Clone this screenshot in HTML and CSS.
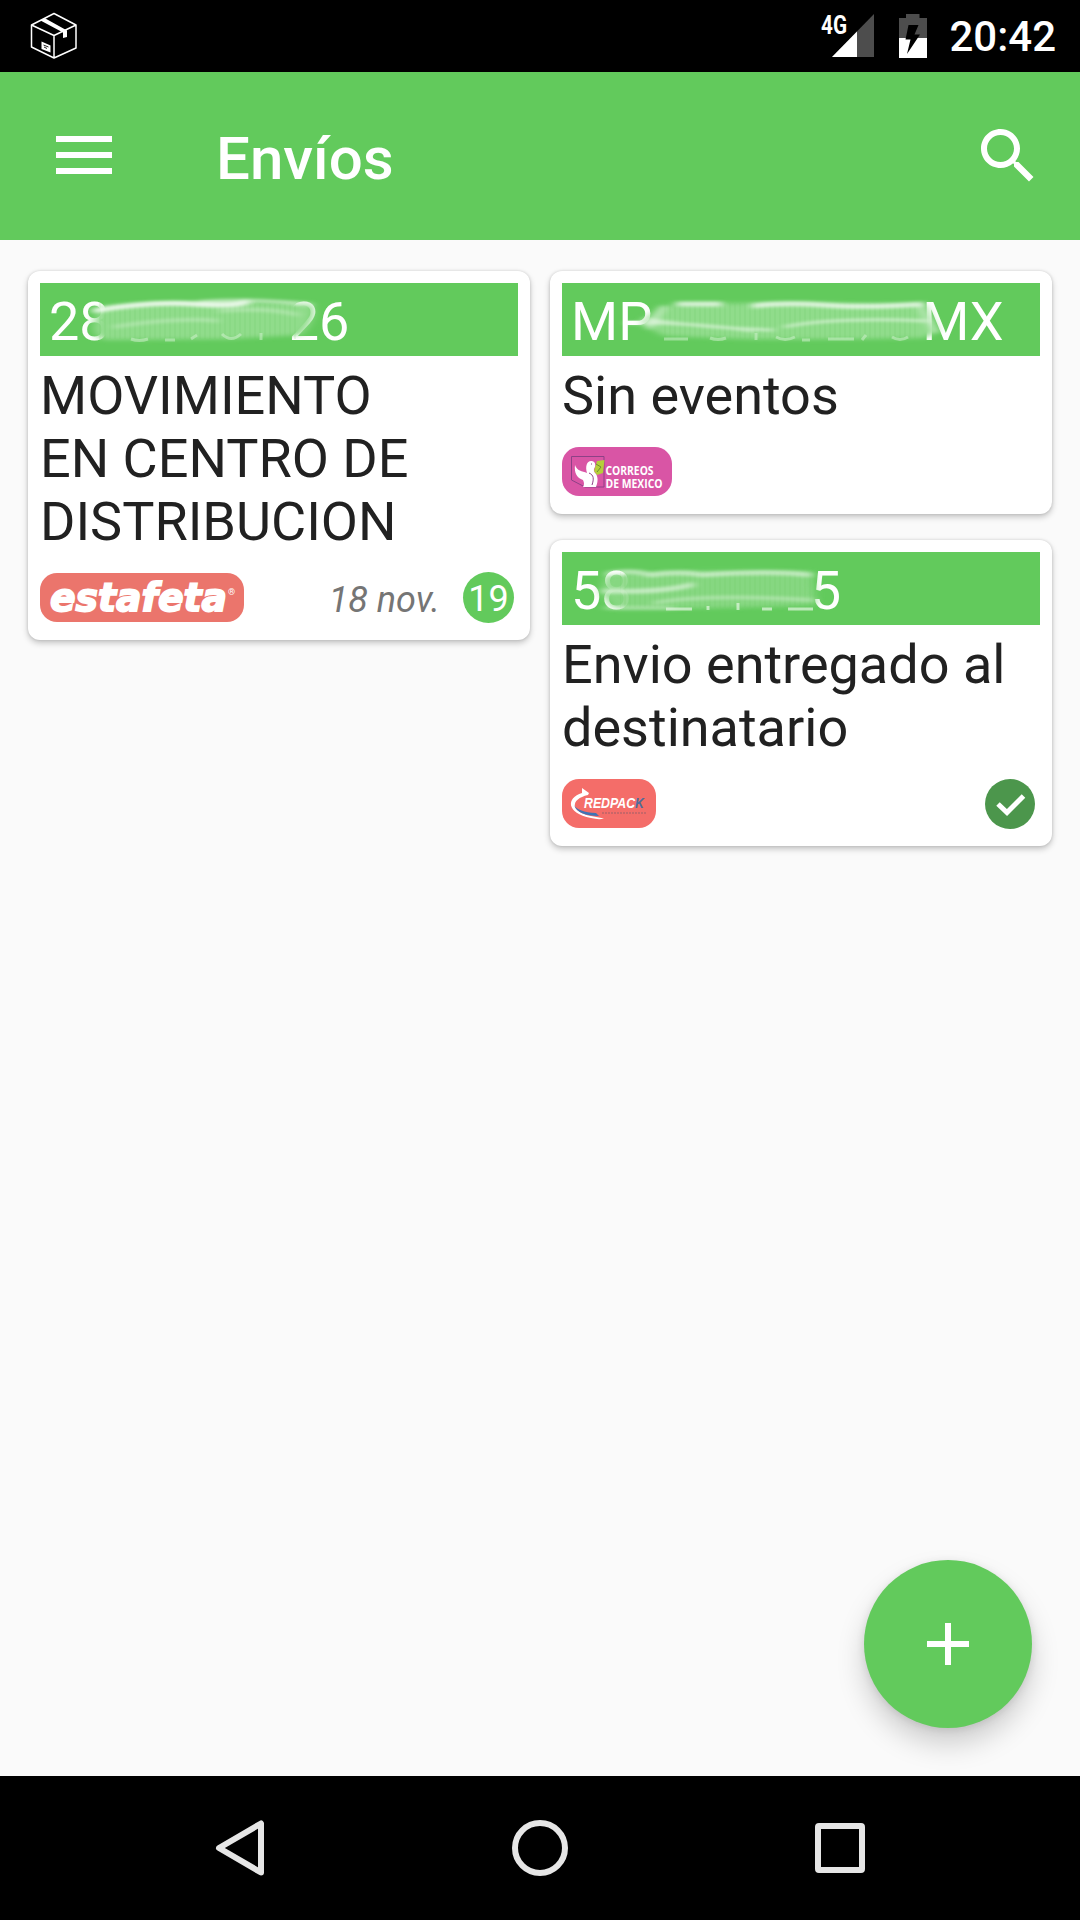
FILE: index.html
```html
<!DOCTYPE html>
<html lang="es">
<head>
    <meta charset="UTF-8">
    <meta name="viewport" content="width=device-width, initial-scale=1.0">
    <title>Envíos</title>
    <link rel="stylesheet" href="styles.css">
</head>
<body>
    <svg class="defs" width="0" height="0">
        <defs>
            <filter id="soft" x="-20%" y="-50%" width="140%" height="200%"><feGaussianBlur stdDeviation="5 2"/></filter>
            <filter id="streak" x="-20%" y="-200%" width="140%" height="500%"><feGaussianBlur stdDeviation="4 1.5"/></filter>
            <pattern id="ripple" width="5" height="42" patternUnits="userSpaceOnUse">
                <rect width="2" height="42" fill="#62ca5c" opacity=".12"/>
            </pattern>
        </defs>
    </svg>

    <div class="status-bar">
        <svg class="package" width="48" height="48" viewBox="0 0 48 48" fill="none" stroke="#fff" stroke-width="1.5" stroke-linejoin="round">
            <path d="M24 1.5 46 13V36L24 46 1.500 35V13ZM1.500 13 24 23.500 46 13M24 23.500V46"/>
            <path d="M10.500 8.500 14.500 6 37 18.500V25L33 26V20.500Z" fill="#fff" stroke="none"/>
            <path d="M11.500 29.500 20.500 33.500V40.500L11.500 37Z" fill="#fff" stroke="none"/>
            <path d="M13.500 33 18.500 35M14 35 17 36.500" stroke="#222" stroke-width="1"/>
        </svg>
        <div class="status-icons">
            <svg width="56" height="44" viewBox="0 0 56 44">
                <path d="M54 0V43H12Z" fill="#4d4d4d"/>
                <path d="M37 17.500V43H12Z" fill="#fff"/>
                <text class="network" x="1" y="20" textLength="26" lengthAdjust="spacingAndGlyphs">4G</text>
            </svg>
            <svg class="battery" width="28" height="44" viewBox="0 0 28 44">
                <path d="M7 0H20.500V4H28V24H0V4H7Z" fill="#4d4d4d"/>
                <path d="M0 24H28V44H0Z" fill="#fff"/>
                <path d="M9.500 11H19.500L15.500 20.500H21L8 40 11.500 25.500H6.500Z" fill="#000"/>
            </svg>
            <span class="clock">20:42</span>
        </div>
    </div>

    <div class="app-bar">
        <svg class="menu" width="56" height="38" viewBox="0 0 56 38" fill="#fff">
            <path d="M0 0H56V6H0ZM0 16H56V22H0ZM0 32H56V38H0Z"/>
        </svg>
        <h1>Envíos</h1>
        <svg class="search" width="72" height="72" viewBox="0 0 24 24" fill="#fff">
            <path d="M15.500 14h-.79l-.28-.27C15.410 12.590 16 11.110 16 9.500 16 5.910 13.090 3 9.500 3S3 5.910 3 9.500 5.910 16 9.500 16c1.610 0 3.090-.59 4.230-1.570l.27.28v.79l5 4.990L20.490 19l-4.990-5zm-6 0C7.010 14 5 11.990 5 9.500S7.010 5 9.500 5 14 7.010 14 9.500 11.990 14 9.500 14z"/>
        </svg>
    </div>

    <div class="content">
        <div class="column">
            <div class="card">
                <div class="code">
                    <span>28</span>
                    <svg class="smear smear-a" width="232" height="50" viewBox="0 0 232 50">
                        <path d="M8 10Q60 5 110 5T222 6Q230 20 212 38L140 42 16 43Q0 38 6 24Z" fill="#90dc8b" filter="url(#soft)"/>
                        <path d="M10 6H210V42H10Z" fill="url(#ripple)"/>
                        <g fill="none" stroke="#fff" filter="url(#streak)">
                            <path d="M4 14Q60 4 105 7T160 4" stroke-width="5" opacity=".8"/>
                            <path d="M110 5Q170 1 222 8" stroke-width="4" opacity=".45"/>
                            <path d="M24 30Q90 20 130 24M130 14Q180 10 210 18" stroke-width="4" opacity=".25"/>
                        </g>
                        <path d="M42 42q8 3 17 0M76 43h10M102 42l6-4M133 37q9 9 19 0M172 36v7" fill="none" stroke="#d6f3d4" stroke-width="3" opacity=".5"/>
                    </svg>
                    <span>26</span>
                </div>
                <p class="event">MOVIMIENTO<br>EN CENTRO DE<br>DISTRIBUCION</p>
                <div class="card-footer">
                    <svg class="chip estafeta" width="204" height="49" viewBox="0 0 204 49">
                        <text class="estafeta-name" x="10" y="38" textLength="177" lengthAdjust="spacingAndGlyphs">estafeta</text>
                        <text class="registered" x="188" y="22">®</text>
                    </svg>
                    <span class="date">18 nov.</span>
                    <span class="days">19</span>
                </div>
            </div>
        </div>

        <div class="column">
            <div class="card">
                <div class="code">
                    <span>MP</span>
                    <svg class="smear smear-b" width="306" height="50" viewBox="0 0 306 50">
                        <path d="M28 9Q100 5 180 6T290 7L304 34 290 41Q200 43 110 42L30 39 6 26Z" fill="#90dc8b" filter="url(#soft)"/>
                        <path d="M30 6H285V42H30Z" fill="url(#ripple)"/>
                        <g fill="none" stroke="#fff" filter="url(#streak)">
                            <path d="M42 7H88M118 9Q150 5 190 8T290 7" stroke-width="5" opacity=".7"/>
                            <path d="M-8 26Q60 25 120 34M10 22Q80 32 140 33M150 30Q200 20 294 24" stroke-width="3" opacity=".5"/>
                            <path d="M14 32 30 9M286 8 302 36" stroke-width="4" opacity=".6"/>
                        </g>
                        <path d="M30 42h24M76 41q8 3 16 0M122 36v7M142 40q9 5 19 0M168 43h8M194 42h26M228 43l4-5M258 40q8 5 16 0" fill="none" stroke="#d6f3d4" stroke-width="3" opacity=".5"/>
                    </svg>
                    <span>MX</span>
                </div>
                <p class="event">Sin eventos</p>
                <div class="card-footer">
                    <svg class="chip correos" width="110" height="49" viewBox="0 0 110 49">
                        <path d="M9.500 9.500H42V40H23L9.500 33Z" fill="none" stroke="#8d4186" stroke-width="1"/>
                        <path d="M35 14 42.500 13 41 26 35 28 32 24Z" fill="#b5ce3a"/>
                        <path d="M34 17 39 20 35 25" fill="none" stroke="#6f8d30" stroke-width="1"/>
                        <path d="M13 18C15 24 20 24 25 26 23 19 25 14 29 14 32 14 34 16 33 20 31 23 32 25 34 27 37 32 35 37 34 40H21Q23 37 21 33C15 31 12 26 13 18Z" fill="#fff"/>
                        <path d="M27 26C32 28 32 32 30 38M29 17h1" fill="none" stroke="#8d4186" stroke-width="1"/>
                        <text class="correos-name" x="43.500" y="28" textLength="48" lengthAdjust="spacingAndGlyphs">CORREOS</text>
                        <text class="correos-name" x="43.500" y="41" textLength="57" lengthAdjust="spacingAndGlyphs">DE MEXICO</text>
                    </svg>
                </div>
            </div>

            <div class="card">
                <div class="code">
                    <span>58</span>
                    <svg class="smear smear-c" width="214" height="50" viewBox="0 0 214 50">
                        <path d="M-8 9Q60 5 110 5T198 6L202 39Q120 43 0 43L-14 26Z" fill="#8bd986" opacity=".9" filter="url(#soft)"/>
                        <path d="M6 6H202V42H6Z" fill="url(#ripple)"/>
                        <g fill="none" stroke="#fff" filter="url(#streak)">
                            <path d="M-12 25Q50 27 80 18M-8 8Q20 3 36 9Q60 5 84 8M84 9Q160 4 198 9" stroke-width="5" opacity=".5"/>
                            <path d="M40 37Q90 28 200 34M-10 42H60" stroke-width="4" opacity=".3"/>
                        </g>
                        <path d="M52 43h26M94 40v4M124 37v7M148 43h10M174 43h25" fill="none" stroke="#e3f7e1" stroke-width="3" opacity=".7"/>
                    </svg>
                    <span>5</span>
                </div>
                <p class="event">Envio entregado al destinatario</p>
                <div class="card-footer">
                    <svg class="chip redpack" width="94" height="49" viewBox="0 0 94 49">
                        <path d="M26 16C8 20 8 33 29 37L42 39.500Q37 41 29 39C4 34 4 19 20 14L20 9 27 14 24 20Z" fill="#fff"/>
                        <path d="M12 26Q16 33 34 34L37 37Q16 37 12 26Z" fill="#3f74b5"/>
                        <text class="redpack-name" x="22" y="29" textLength="60" lengthAdjust="spacingAndGlyphs">REDPAC<tspan class="redpack-k">K</tspan></text>
                        <path d="M40 34H84" stroke="#a4616a" stroke-width="1.500" stroke-dasharray="2 1" opacity=".7"/>
                    </svg>
                    <svg class="delivered" width="50" height="50" viewBox="0 0 50 50">
                        <circle cx="25" cy="25" r="25" fill="#4c964c"/>
                        <path d="M13 25 22 33.500 38.500 17" fill="none" stroke="#fff" stroke-width="5"/>
                    </svg>
                </div>
            </div>
        </div>

        <button class="fab" aria-label="Agregar">
            <svg width="42" height="42" viewBox="0 0 42 42" fill="#fff">
                <path d="M18 0H24V18H42V24H24V42H18V24H0V18H18Z"/>
            </svg>
        </button>
    </div>

    <div class="nav-bar">
        <svg width="56" height="56" viewBox="0 0 56 56"><path d="M49 3.500V52.500L7 28Z"/></svg>
        <svg width="56" height="56" viewBox="0 0 56 56"><circle cx="28" cy="28" r="25"/></svg>
        <svg width="56" height="56" viewBox="0 0 56 56"><rect x="6" y="6" width="44" height="44" rx="1"/></svg>
    </div>
</body>
</html>
```

FILE: styles.css
```css
body {
    margin: 0;
    height: 1920px;
    display: flex;
    flex-direction: column;
    background-color: #fafafa;
    color: #212121;
    font-family: Roboto, sans-serif;
    overflow: hidden;
}
svg {
    display: block;
    flex-shrink: 0;
}
.defs {
    position: absolute;
}
.status-bar {
    height: 72px;
    background-color: #000000;
    color: #ffffff;
    display: flex;
    align-items: center;
    justify-content: space-between;
    padding: 0 24px 0 30px;
    box-sizing: border-box;
}
.status-icons {
    display: flex;
    align-items: center;
}
.status-icons svg {
    overflow: visible;
}
.network {
    font-size: 26px;
    font-weight: bold;
    fill: #ffffff;
}
.battery {
    margin: 0 22px 0 23px;
}
.clock {
    font-size: 42px;
    font-weight: 500;
    line-height: 74px;
    height: 72px;
}
.app-bar {
    height: 168px;
    background-color: #62ca5c;
    color: #ffffff;
    display: flex;
    align-items: center;
    padding: 0 36px 0 56px;
    box-sizing: border-box;
}
.menu {
    margin-bottom: 2px;
}
h1 {
    flex: 1;
    margin: 4px 0 0 104px;
    font-size: 60px;
    font-weight: 500;
}
.content {
    flex: 1;
    position: relative;
    display: flex;
    align-items: flex-start;
    gap: 20px;
    padding: 31px 28px 0;
}
.column {
    width: 502px;
    display: flex;
    flex-direction: column;
    gap: 26px;
}
.card {
    background-color: #ffffff;
    border-radius: 12px;
    padding: 12px 12px 18px;
    box-shadow: 0 3px 6px rgba(0, 0, 0, 0.22), 0 0 3px rgba(0, 0, 0, 0.14);
}
.code {
    height: 73px;
    background-color: #62ca5c;
    color: #ffffff;
    display: flex;
    align-items: center;
    padding-left: 9px;
    font-size: 54px;
    line-height: 73px;
    padding-top: 4px;
    box-sizing: border-box;
}
.smear {
    z-index: 1;
    overflow: visible;
}
.smear-a {
    margin: 0 -32px 0 -21px;
}
.smear-b {
    margin: 0 -18px 0 -18px;
}
.smear-c {
    margin: 0 -17px 0 -18px;
}
.event {
    margin: 8px 0 20px;
    font-size: 54px;
    line-height: 63px;
}
.card-footer {
    height: 49px;
    display: flex;
    align-items: center;
}
.chip {
    border-radius: 17px;
}
.estafeta {
    background-color: #eb756c;
}
.estafeta-name {
    font-family: "DejaVu Sans", sans-serif;
    font-size: 39px;
    font-weight: bold;
    font-style: italic;
    fill: #ffffff;
    stroke: #ffffff;
    stroke-width: 1.8px;
}
.registered {
    font-size: 9px;
    fill: #ffffff;
}
.correos {
    background-color: #d955a5;
}
.correos-name {
    font-family: "Open Sans", sans-serif;
    font-size: 12px;
    font-weight: bold;
    fill: #ffffff;
}
.redpack {
    background-color: #f46d69;
}
.redpack-name {
    font-family: "Liberation Sans", sans-serif;
    font-size: 14px;
    font-weight: bold;
    font-style: italic;
    fill: #ffffff;
}
.redpack-k {
    fill: #4c6c9c;
}
.date {
    margin-left: auto;
    margin-right: 23px;
    font-size: 36px;
    font-style: italic;
    color: #757575;
    padding-top: 5px;
}
.days {
    width: 51px;
    height: 51px;
    margin-right: 4px;
    border-radius: 50%;
    background-color: #62ca5c;
    color: #ffffff;
    font-size: 36px;
    line-height: 54px;
    text-align: center;
}
.delivered {
    margin-left: auto;
    margin-right: 5px;
}
.fab {
    position: absolute;
    right: 48px;
    bottom: 48px;
    width: 168px;
    height: 168px;
    padding: 0;
    border: none;
    border-radius: 50%;
    background-color: #62ca5c;
    display: flex;
    align-items: center;
    justify-content: center;
    box-shadow: 0 16px 28px rgba(0, 0, 0, 0.18), 0 2px 8px rgba(0, 0, 0, 0.1);
}
.nav-bar {
    height: 144px;
    background-color: #000000;
    display: flex;
    align-items: center;
    justify-content: center;
    gap: 244px;
    fill: none;
    stroke: #e6e6e6;
    stroke-width: 6px;
    stroke-linejoin: round;
}
```
